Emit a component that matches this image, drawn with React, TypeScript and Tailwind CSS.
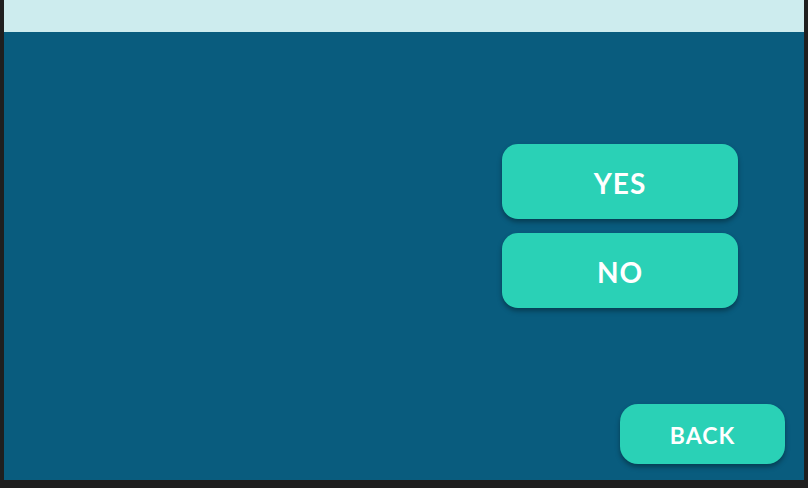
export default function App() {
  const btn =
    "flex items-center justify-center bg-[#2ad1b6] text-white font-bold shadow-[0_3px_5px_rgba(0,0,0,0.35)]";
  return (
    <div
      className="w-[808px] h-[488px] bg-[#1f1f1f] pl-[4px] pr-[4px] pb-[8px]"
      style={{ fontFamily: "Lato, 'Open Sans', sans-serif" }}
    >
      <div className="w-[800px] h-[480px] flex flex-col bg-[#095c7e]">
        <div className="h-[32px] bg-[#cdecee]" />
        <div className="flex-1 flex flex-col">
          <div className="flex flex-col gap-[14px] ml-[498px] mt-[112px] w-[236px]">
            <div className={`${btn} h-[75px] pt-[3px] rounded-[16px] text-[28px] tracking-[1px]`}>YES</div>
            <div className={`${btn} h-[75px] pt-[3px] rounded-[16px] text-[28px] tracking-[1px]`}>NO</div>
          </div>
          <div className="mt-auto self-end mr-[19px] mb-[16px]">
            <div className={`${btn} w-[165px] h-[60px] pt-[2px] rounded-[18px] text-[23px] tracking-[1px]`}>BACK</div>
          </div>
        </div>
      </div>
    </div>
  );
}
